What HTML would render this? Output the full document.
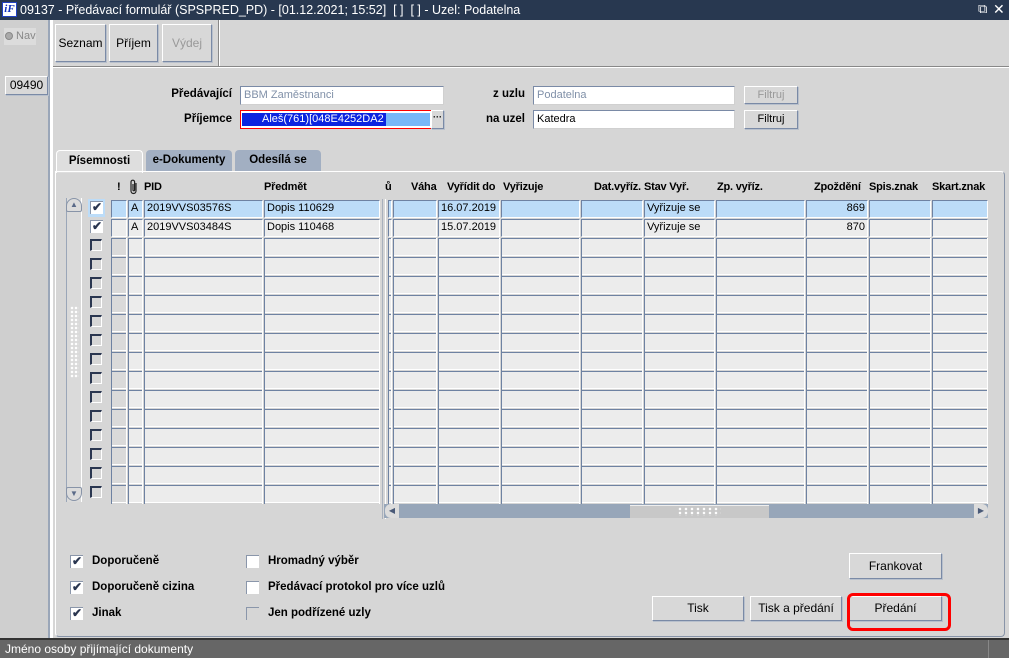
<!DOCTYPE html>
<html><head><meta charset="utf-8">
<style>
*{box-sizing:border-box;margin:0;padding:0}
body{width:1009px;height:658px;overflow:hidden;background:#d6d6d6;font-family:"Liberation Sans",Arial,sans-serif;font-size:12px;color:#000;position:relative}
.a{position:absolute}
.btn{position:absolute;background:#d8d8d8;border:1px solid;border-color:#fff #7a8aa6 #7a8aa6 #fff;box-shadow:1px 1px 0 #b8c0cc;text-align:center;font-size:12px}
.inp{position:absolute;background:#fff;border:1px solid;border-color:#7a8aa6 #d0d0d0 #d0d0d0 #7a8aa6;height:19px;padding:2px 3px;font-size:11px;line-height:13px}
.c{position:absolute;height:18px;background:#ececec;border-left:1px solid #6e82a2;border-top:1px solid #6e82a2;border-right:1px solid #fff;border-bottom:1px solid #fff;font-size:11px;line-height:15px;padding-left:2px;white-space:nowrap;overflow:hidden}
.s{background:#bcdcf8}
.col{position:absolute;top:238px;height:266px;background:repeating-linear-gradient(to bottom,#6e82a2 0 1px,#ececec 1px 17px,#fff 17px 18px,#d6d6d6 18px 19px);border-left:1px solid #6e82a2;border-right:1px solid #fff}
.cb{position:absolute;left:90px;width:12px;height:12px;background:#d6d6d6;border-left:2px solid #2a3650;border-top:2px solid #2a3650;border-right:1px solid #fff;border-bottom:1px solid #fff}
.ck{position:absolute;width:13px;height:13px;background:#fff;border-left:1px solid #8a96aa;border-top:1px solid #8a96aa;font-size:12px;line-height:11px;text-align:center;font-weight:bold;color:#2a3650}
.h{position:absolute;top:181px;font-weight:bold;font-size:11px;letter-spacing:-0.2px;white-space:nowrap}
.lbl{position:absolute;font-weight:bold;font-size:11.5px;white-space:nowrap}
</style></head><body>
<div class="a" style="left:0;top:0;width:1009px;height:20px;background:#283850;color:#fff;font-size:12.5px;line-height:20px;padding-left:20px">09137 - Předávací formulář (SPSPRED_PD) - [01.12.2021; 15:52]&nbsp; [ ]&nbsp; [ ] - Uzel: Podatelna</div>
<div class="a" style="left:2px;top:2px;width:15px;height:15px;background:#fff;border:1px solid #2040c0;color:#1030c0;font:italic bold 11px 'Liberation Serif',serif;line-height:13px;text-align:center">iF</div>
<div class="a" style="left:978px;top:1px;color:#fff;font-size:13px">⧉</div>
<div class="a" style="left:993px;top:1px;color:#fff;font-size:14px">✕</div>
<div class="a" style="left:0;top:20px;width:50px;height:618px;background:#cfcfcf;border-right:2px solid #9aa6b8"></div>
<div class="a" style="left:50px;top:20px;width:3px;height:618px;background:#fff"></div>
<div class="a" style="left:4px;top:28px;width:32px;height:17px;background:#dcdcdc;color:#888;font-size:11px;line-height:17px;padding-left:1px"><span style="display:inline-block;width:8px;height:8px;border-radius:50%;background:#aaa;border:1px solid #888;vertical-align:-1px"></span> Nav</div>
<div class="btn" style="left:5px;top:76px;width:43px;height:19px;line-height:17px">09490</div>
<div class="btn" style="left:55px;top:24px;width:51px;height:38px;line-height:36px">Seznam</div>
<div class="btn" style="left:109px;top:24px;width:49px;height:38px;line-height:36px">Příjem</div>
<div class="btn" style="left:162px;top:24px;width:50px;height:38px;line-height:36px;color:#999">Výdej</div>
<div class="a" style="left:218px;top:20px;width:1px;height:46px;background:#888"></div>
<div class="a" style="left:219px;top:20px;width:1px;height:46px;background:#fff"></div>
<div class="a" style="left:53px;top:66px;width:956px;height:1px;background:#888"></div>
<div class="a" style="left:53px;top:67px;width:956px;height:1px;background:#fff"></div>
<div class="lbl" style="left:150px;top:88px;width:82px;text-align:right">Předávající</div>
<div class="inp" style="left:240px;top:86px;width:204px;color:#8090a8">BBM Zaměstnanci</div>
<div class="lbl" style="left:150px;top:113px;width:82px;text-align:right">Příjemce</div>
<div class="a" style="left:240px;top:110px;width:192px;height:19px;border:1px solid #f00;background:#fff;padding:2px 1px"><div style="height:13px;background:#78b8f8;position:relative"><div style="position:absolute;left:0;top:0;width:144px;height:13px;background:#0c24e0;color:#fff;font-size:11px;line-height:13px;padding-left:20px">Aleš(761)[048E4252DA2</div></div></div>
<div class="btn" style="left:431px;top:110px;width:13px;height:19px;font-size:9px;line-height:12px;font-weight:bold">···</div>
<div class="lbl" style="left:470px;top:88px;width:55px;text-align:right">z uzlu</div>
<div class="inp" style="left:533px;top:86px;width:202px;color:#8090a8">Podatelna</div>
<div class="btn" style="left:744px;top:86px;width:54px;height:18px;line-height:16px;font-size:11px;color:#999">Filtruj</div>
<div class="lbl" style="left:470px;top:113px;width:55px;text-align:right">na uzel</div>
<div class="inp" style="left:533px;top:110px;width:202px">Katedra</div>
<div class="btn" style="left:744px;top:110px;width:54px;height:19px;line-height:17px;font-size:11px">Filtruj</div>
<div class="a" style="left:56px;top:150px;width:87px;height:23px;background:#dedede;border:1px solid #fff;border-bottom:none;border-radius:4px 4px 0 0;font-weight:bold;text-align:center;line-height:20px;font-size:11.5px">Písemnosti</div>
<div class="a" style="left:146px;top:150px;width:86px;height:21px;background:#a2afc2;border-radius:4px 4px 0 0;font-weight:bold;text-align:center;line-height:21px;font-size:11.5px">e-Dokumenty</div>
<div class="a" style="left:235px;top:150px;width:86px;height:21px;background:#a2afc2;border-radius:4px 4px 0 0;font-weight:bold;text-align:center;line-height:21px;font-size:11.5px">Odesílá se</div>
<div class="a" style="left:55px;top:171px;width:950px;height:466px;border:1px solid;border-color:#fff #8894a8 #8894a8 #fff;border-radius:0 4px 4px 4px"></div>
<div class="h" style="left:117px">!</div>
<svg class="a" style="left:129px;top:179px" width="10" height="16" viewBox="0 0 10 16"><path d="M7 4 V12 A2.5 2.5 0 0 1 2 12 V3 A1.8 1.8 0 0 1 5.6 3 V11 A0.8 0.8 0 0 1 4 11 V5" fill="none" stroke="#222" stroke-width="1.2"/></svg>
<div class="h" style="left:144px">PID</div>
<div class="h" style="left:264px">Předmět</div>
<div class="h" style="left:385px">ů</div>
<div class="h" style="left:411px">Váha</div>
<div class="h" style="left:447px">Vyřídit do</div>
<div class="h" style="left:503px">Vyřizuje</div>
<div class="h" style="left:594px">Dat.vyříz.</div>
<div class="h" style="left:644px">Stav Vyř.</div>
<div class="h" style="left:717px">Zp. vyříz.</div>
<div class="h" style="left:814px">Zpoždění</div>
<div class="h" style="left:869px">Spis.znak</div>
<div class="h" style="left:932px">Skart.znak</div>
<div class="a" style="left:66px;top:198px;width:16px;height:304px;background:#dadada;border-left:1px solid #9aa6b8;border-right:1px solid #fff"></div>
<div class="a" style="left:66px;top:198px;width:16px;height:14px;background:#dcdcdc;border:1px solid #8894a8;border-radius:8px 8px 2px 2px;font-size:8px;line-height:12px;text-align:center;color:#5a6a88">▲</div>
<div class="a" style="left:66px;top:487px;width:16px;height:14px;background:#dcdcdc;border:1px solid #8894a8;border-radius:2px 2px 8px 8px;font-size:8px;line-height:12px;text-align:center;color:#5a6a88">▼</div>
<div class="a" style="left:70px;top:306px;width:9px;height:72px;background:radial-gradient(circle,#fff 1px,transparent 1.5px) 0 0/4px 4px"></div>
<div class="a" style="left:88px;top:199px;width:17px;height:18px;background:#bcdcf8"></div>
<div class="ck" style="left:90px;top:201px;background:#fff">✔</div>
<div class="ck" style="left:90px;top:220px;background:#fff">✔</div>
<div class="cb" style="top:239px"></div><div class="cb" style="top:258px"></div><div class="cb" style="top:277px"></div><div class="cb" style="top:296px"></div><div class="cb" style="top:315px"></div><div class="cb" style="top:334px"></div><div class="cb" style="top:353px"></div><div class="cb" style="top:372px"></div><div class="cb" style="top:391px"></div><div class="cb" style="top:410px"></div><div class="cb" style="top:429px"></div><div class="cb" style="top:448px"></div><div class="cb" style="top:467px"></div><div class="cb" style="top:486px"></div>
<div class="c s" style="top:200px;left:111px;width:16px"></div>
<div class="c s" style="top:200px;left:128px;width:15px">A</div>
<div class="c s" style="top:200px;left:144px;width:119px">2019VVS03576S</div>
<div class="c s" style="top:200px;left:264px;width:116px">Dopis 110629</div>
<div class="c s" style="top:200px;left:388px;width:4px"></div>
<div class="c s" style="top:200px;left:393px;width:44px"></div>
<div class="c s" style="top:200px;left:438px;width:62px">16.07.2019</div>
<div class="c s" style="top:200px;left:501px;width:79px"></div>
<div class="c s" style="top:200px;left:581px;width:62px"></div>
<div class="c s" style="top:200px;left:644px;width:71px">Vyřizuje se</div>
<div class="c s" style="top:200px;left:716px;width:89px"></div>
<div class="c s" style="top:200px;left:806px;width:62px;text-align:right;padding-right:2px">869</div>
<div class="c s" style="top:200px;left:869px;width:62px"></div>
<div class="c s" style="top:200px;left:932px;width:56px"></div>
<div class="c" style="top:219px;left:111px;width:16px"></div>
<div class="c" style="top:219px;left:128px;width:15px">A</div>
<div class="c" style="top:219px;left:144px;width:119px">2019VVS03484S</div>
<div class="c" style="top:219px;left:264px;width:116px">Dopis 110468</div>
<div class="c" style="top:219px;left:388px;width:4px"></div>
<div class="c" style="top:219px;left:393px;width:44px"></div>
<div class="c" style="top:219px;left:438px;width:62px">15.07.2019</div>
<div class="c" style="top:219px;left:501px;width:79px"></div>
<div class="c" style="top:219px;left:581px;width:62px"></div>
<div class="c" style="top:219px;left:644px;width:71px">Vyřizuje se</div>
<div class="c" style="top:219px;left:716px;width:89px"></div>
<div class="c" style="top:219px;left:806px;width:62px;text-align:right;padding-right:2px">870</div>
<div class="c" style="top:219px;left:869px;width:62px"></div>
<div class="c" style="top:219px;left:932px;width:56px"></div>
<div class="col" style="left:111px;width:16px;background:repeating-linear-gradient(to bottom,#6e82a2 0 1px,#dadada 1px 17px,#fff 17px 18px,#d6d6d6 18px 19px)"></div>
<div class="col" style="left:128px;width:15px"></div>
<div class="col" style="left:144px;width:119px"></div>
<div class="col" style="left:264px;width:116px"></div>
<div class="col" style="left:388px;width:4px"></div>
<div class="col" style="left:393px;width:44px"></div>
<div class="col" style="left:438px;width:62px"></div>
<div class="col" style="left:501px;width:79px"></div>
<div class="col" style="left:581px;width:62px"></div>
<div class="col" style="left:644px;width:71px"></div>
<div class="col" style="left:716px;width:89px"></div>
<div class="col" style="left:806px;width:62px"></div>
<div class="col" style="left:869px;width:62px"></div>
<div class="col" style="left:932px;width:56px"></div>
<div class="a" style="left:382px;top:199px;width:4px;height:320px;border-left:1px solid #a8b0bc;border-right:1px solid #fff;background:#d6d6d6"></div>
<div class="a" style="left:384px;top:504px;width:604px;height:14px;background:#97a6b9"></div>
<div class="a" style="left:385px;top:504px;width:14px;height:14px;background:#dcdcdc;border-radius:6px 0 0 6px;font-size:8px;line-height:14px;text-align:center;color:#4a5a78">◀</div>
<div class="a" style="left:974px;top:504px;width:14px;height:14px;background:#dcdcdc;border-radius:0 6px 6px 0;font-size:8px;line-height:14px;text-align:center;color:#4a5a78">▶</div>
<div class="a" style="left:630px;top:505px;width:139px;height:13px;background:#c8c8c8;border-top:1px solid #eee"></div>
<div class="a" style="left:677px;top:507px;width:44px;height:9px;background:radial-gradient(circle,#fff 1px,transparent 1.5px) 0 0/6px 4px"></div>
<div class="ck" style="left:70px;top:555px">✔</div><div class="lbl" style="left:92px;top:555px">Doporučeně</div>
<div class="ck" style="left:70px;top:581px">✔</div><div class="lbl" style="left:92px;top:581px">Doporučeně cizina</div>
<div class="ck" style="left:70px;top:607px">✔</div><div class="lbl" style="left:92px;top:607px">Jinak</div>
<div class="ck" style="left:246px;top:555px"></div><div class="lbl" style="left:268px;top:555px">Hromadný výběr</div>
<div class="ck" style="left:246px;top:581px"></div><div class="lbl" style="left:268px;top:581px">Předávací protokol pro více uzlů</div>
<div class="ck" style="left:246px;top:607px;background:#d6d6d6"></div><div class="lbl" style="left:268px;top:607px">Jen podřízené uzly</div>
<div class="btn" style="left:849px;top:553px;width:93px;height:26px;line-height:24px">Frankovat</div>
<div class="btn" style="left:652px;top:596px;width:92px;height:25px;line-height:23px">Tisk</div>
<div class="btn" style="left:750px;top:596px;width:92px;height:25px;line-height:23px">Tisk a předání</div>
<div class="btn" style="left:849px;top:596px;width:93px;height:25px;line-height:23px">Předání</div>
<div class="a" style="left:847px;top:593px;width:104px;height:38px;border:3px solid #f00;border-radius:6px"></div>
<div class="a" style="left:0;top:638px;width:1009px;height:20px;background:#666;border-top:2px solid #333;color:#fff;font-size:12px;line-height:18px;padding-left:5px">Jméno osoby přijímající dokumenty</div>
<div class="a" style="left:988px;top:640px;width:1px;height:18px;background:#888"></div>
</body></html>
